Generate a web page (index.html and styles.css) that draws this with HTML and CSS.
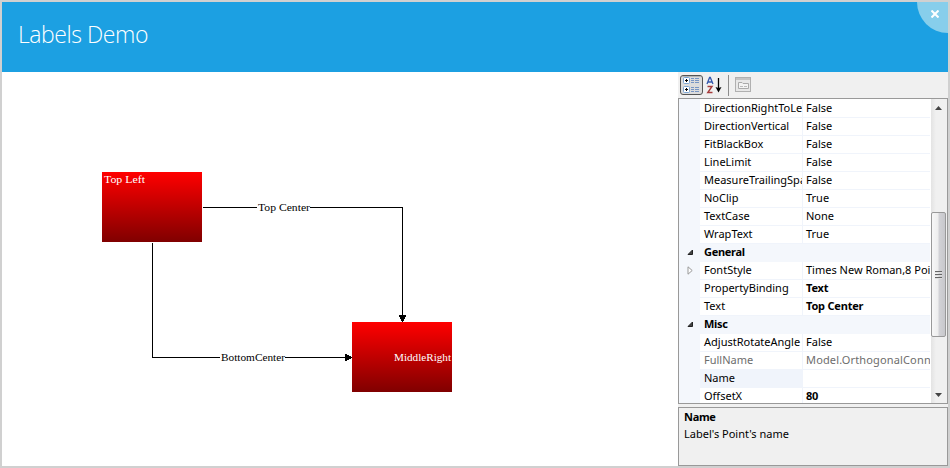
FILE: index.html
```html
<!DOCTYPE html>
<html lang="en">
<head>
<meta charset="utf-8">
<title>Labels Demo</title>
<link rel="stylesheet" href="styles.css">
</head>
<body>
<div class="window">
  <header class="header">
    <h1 class="title">Labels Demo</h1>
    <button class="close" aria-label="Close"><svg width="8" height="8" viewBox="0 0 8 8"><path d="M.5 .5L7.500 7.500M7.500 .5L.5 7.500" stroke="#fff" stroke-width="2"/></svg></button>
  </header>
  <main class="main">
    <svg class="diagram" width="676" height="394" viewBox="2 72 676 394">
      <defs>
        <linearGradient id="red" x1="0" y1="0" x2="0" y2="1"><stop offset="0" stop-color="#f00"/><stop offset="1" stop-color="#800000"/></linearGradient>
      </defs>
      <g shape-rendering="crispEdges">
        <rect x="102" y="172" width="100" height="70" fill="url(#red)"/>
        <rect x="352" y="322" width="100" height="70" fill="url(#red)"/>
        <path d="M203 207.5H257M310 207.5H402.5V322M152.5 243V357.5H220M285 357.5H352" fill="none" stroke="#000"/>
        <path d="M399 315h7v2h-1v2h-1v2h-3v-2h-1v-2h-1zM345 354h2v1h2v1h2v1h1v1h-1v1h-2v1h-2v1h-2z"/>
      </g>
      <g class="labels">
        <text x="104" y="183" fill="#fff" textLength="41" lengthAdjust="spacingAndGlyphs">Top Left</text>
        <text x="258" y="211" textLength="52" lengthAdjust="spacingAndGlyphs">Top Center</text>
        <text x="221" y="361" textLength="64" lengthAdjust="spacingAndGlyphs">BottomCenter</text>
        <text x="394" y="361" fill="#fff" textLength="57" lengthAdjust="spacingAndGlyphs">MiddleRight</text>
      </g>
    </svg>
    <aside class="panel">
      <div class="toolbar">
        <svg width="76" height="22" viewBox="0 0 76 22">
          <rect x=".5" y=".5" width="22" height="19" rx="2.500" fill="#dcdcdc" stroke="#555"/>
          <path d="M2 1.500H21" stroke="#b5b5b5"/>
          <g fill="#fff" stroke="#7aa5d5"><rect x="3.500" y="2.500" width="6" height="6" rx="1"/><rect x="3.500" y="11.500" width="6" height="6" rx="1"/></g>
          <path d="M5 5.500H8M6.500 4V7M5 14.500H8M6.500 13V16" stroke="#000"/>
          <path d="M11 3.500H14M15 3.500H19M11 5.500H14M15 5.500H19M11 7.500H14M15 7.500H19M11 12.500H14M15 12.500H19M11 14.500H14M15 14.500H19M11 16.500H14M15 16.500H19" stroke="#7795c4"/>
          <path d="M27 9L29.600 2.500H30.300L33 9M28 7H32" fill="none" stroke="#3458ac" stroke-width="1.300"/>
          <path d="M27.500 11.500H32L27.800 17.500H32.500" fill="none" stroke="#a63c3c" stroke-width="1.400"/>
          <path d="M38.500 3V14" stroke="#000" stroke-width="1.300"/><path d="M35.500 12L38.500 17.500L41.500 12L38.500 13Z"/>
          <path d="M48.500 0V21" stroke="#8c8c8c"/>
          <rect x="55.500" y="2.500" width="15" height="14" fill="#e8e8e8" stroke="#b0b0b0"/>
          <path d="M56 4H70" stroke="#c5c5c5" stroke-width="2"/>
          <path d="M58.500 13.500V7.500H62L63 8.500H68.500V13.500Z" fill="#f3f3f3" stroke="#aaa"/>
          <path d="M60 11.500H63M64 11.500H67" stroke="#bbb"/>
        </svg>
      </div>
      <section class="grid">
        <div class="rows">
          <div class="row"><i></i><b>DirectionRightToLeft</b><span>False</span></div>
          <div class="row"><i></i><b>DirectionVertical</b><span>False</span></div>
          <div class="row"><i></i><b>FitBlackBox</b><span>False</span></div>
          <div class="row"><i></i><b>LineLimit</b><span>False</span></div>
          <div class="row"><i></i><b>MeasureTrailingSpaces</b><span>False</span></div>
          <div class="row"><i></i><b>NoClip</b><span>True</span></div>
          <div class="row"><i></i><b>TextCase</b><span>None</span></div>
          <div class="row"><i></i><b>WrapText</b><span>True</span></div>
          <div class="row category"><i><svg width="7" height="7"><path d="M5.500 1V5.500H1Z" fill="#444" stroke="#222"/></svg></i><b>General</b></div>
          <div class="row"><i><svg width="7" height="9"><path d="M1 .8L5.200 4.500L1 8.200Z" fill="#fff" stroke="#999"/></svg></i><b>FontStyle</b><span>Times New Roman,8 Point</span></div>
          <div class="row"><i></i><b>PropertyBinding</b><span class="strong">Text</span></div>
          <div class="row"><i></i><b>Text</b><span class="strong">Top Center</span></div>
          <div class="row category"><i><svg width="7" height="7"><path d="M5.500 1V5.500H1Z" fill="#444" stroke="#222"/></svg></i><b>Misc</b></div>
          <div class="row"><i></i><b>AdjustRotateAngle</b><span>False</span></div>
          <div class="row muted"><i></i><b>FullName</b><span>Model.OrthogonalConnector</span></div>
          <div class="row selected"><i></i><b>Name</b><span></span></div>
          <div class="row"><i></i><b>OffsetX</b><span class="strong">80</span></div>
        </div>
        <div class="scroll">
          <svg class="arrow" width="7" height="4"><path d="M0 4L3.500 0L7 4Z" fill="#444"/></svg>
          <div class="thumb"><svg width="7" height="8" shape-rendering="crispEdges"><path d="M0 .5H7M0 3.500H7M0 6.500H7" stroke="#666"/><path d="M0 1.500H7M0 4.500H7M0 7.500H7" stroke="#ddd"/></svg></div>
          <svg class="arrow down" width="7" height="4"><path d="M0 0L3.500 4L7 0Z" fill="#444"/></svg>
        </div>
      </section>
      <section class="description">
        <h2>Name</h2>
        <p>Label's Point's name</p>
      </section>
    </aside>
  </main>
</div>
</body>
</html>
```
FILE: styles.css
```css
* { box-sizing: border-box; }
body { margin: 0; font-family: "Noto Sans", sans-serif; font-size: 11px; color: #000; }
.window { width: 950px; height: 468px; border: 2px solid #d0d0d0; background: #fff; overflow: hidden; }
.header { height: 70px; background: #1ca0e2; display: flex; justify-content: space-between; overflow: hidden; }
.title { margin: 0; padding: 15px 0 0 16px; font: 300 23px/35px "Open Sans", sans-serif; color: #fff; letter-spacing: -.45px; }
.close { width: 62px; height: 62px; margin: -31px -31px 0 0; padding: 39px 0 0 14px; border: 0; border-radius: 50%; background: #87ceeb; display: flex; align-items: flex-start; flex: none; }
.main { display: flex; height: 394px; }
.diagram { flex: none; display: block; }
.labels { font: 11px "Liberation Serif", serif; }
.panel { width: 270px; height: 394px; background: #f0f0f0; display: flex; flex-direction: column; }
.toolbar { height: 26px; padding: 3px 0 0 2px; flex: none; }
.toolbar svg { display: block; }
.grid { height: 306px; flex: none; border: 1px solid #999; background: #fff; display: flex; overflow: hidden; }
.rows { width: 252px; padding-top: 1px; background: linear-gradient(90deg, #f4f7fc 21px, #fff 21px); }
.row { display: grid; grid-template-columns: 21px 103px 127px; width: 251px; height: 18px; line-height: 16px; white-space: nowrap; }
.row > i { background: #f4f7fc; display: flex; align-items: center; padding: 0 0 2px 8px; }
.row > b { font-weight: 400; padding-left: 4px; overflow: hidden; border-right: 1px solid #f0f4fb; border-bottom: 1px solid #f0f4fb; }
.row > span { padding-left: 3px; overflow: hidden; border-bottom: 1px solid #f0f4fb; }
.row > .strong { font-weight: 700; letter-spacing: -.2px; }
.row.category { background: #f4f7fc; }
.row.category > b { font-weight: 700; letter-spacing: -.3px; border: 0; }
.row.muted { color: #6d6d6d; }
.muted > span { letter-spacing: .15px; }
.row.selected > b { background: #f0f4fb; }
.scroll { width: 16px; background: linear-gradient(90deg, #e3e3e3, #f0f0f0 5px); display: flex; flex-direction: column; align-items: center; padding: 7px 1px 6px 0; }
.arrow { flex: none; }
.thumb { width: 15px; height: 125px; margin-top: 102px; flex: none; border: 1px solid #999; border-radius: 2px; background: linear-gradient(90deg, #f7f7f7 0, #eee 45%, #d2d2d6 55%, #c8c8cc 100%); display: flex; align-items: center; justify-content: center; }
.down { margin-top: auto; }
.description { height: 59px; margin-top: 3px; flex: none; border: 1px solid #999; padding: 0 5px; }
.description h2, .description p { margin: 0; font-size: 11px; line-height: 17px; }
.description h2 { letter-spacing: -.3px; }
```
